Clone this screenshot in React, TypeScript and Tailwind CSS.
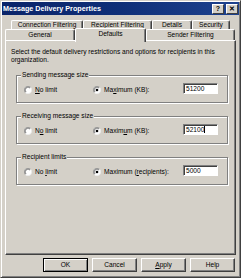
import React from "react";

const font = { fontFamily: '"Liberation Sans", Arial, sans-serif' };

function Radio({ checked }: { checked?: boolean }) {
  return (
    <svg width="8" height="8" viewBox="0 0 12 12" className="shrink-0">
      <circle cx="6" cy="6" r="5.5" fill="#fff" />
      <path d="M10 2 A5.5 5.5 0 0 0 2 10" fill="none" stroke="#808080" strokeWidth="1.2" />
      <path d="M2 10 A5.5 5.5 0 0 0 10 2" fill="none" stroke="#e8e8e8" strokeWidth="1.2" />
      <path d="M9 3 A4.2 4.2 0 0 0 3 9" fill="none" stroke="#404040" strokeWidth="1" />
      {checked && <circle cx="6" cy="6" r="2" fill="#000" />}
    </svg>
  );
}

function Group({
  label,
  noLimit,
  max,
  value,
  cursor,
}: {
  label: string;
  noLimit: React.ReactNode;
  max: React.ReactNode;
  value: string;
  cursor?: boolean;
}) {
  return (
    <div className="relative ml-[10px] mr-[7px] h-[28px] border border-[#808080] shadow-[inset_1px_1px_0_#fff,1px_1px_0_#fff] flex items-center">
      <span className="absolute left-[4px] top-[-5px] bg-[#d4d0c8] px-[1px] leading-[8px] text-[6.6px]">
        {label}
      </span>
      <div className="flex items-center w-[76px] pl-[7px] mt-[1px]">
        <Radio />
        <span className="ml-[3px] text-[6.6px] leading-[8px]">{noLimit}</span>
      </div>
      <div className="flex items-center mt-[1px]">
        <Radio checked />
        <span className="ml-[3px] text-[6.6px] leading-[8px]">{max}</span>
      </div>
      <div className="ml-auto mr-[9px] mt-[-1px] w-[35px] h-[11px] bg-white border border-t-[#808080] border-l-[#808080] border-r-[#fff] border-b-[#fff] shadow-[inset_1px_1px_0_#404040] flex items-center pl-[2px] text-[6.6px]">
        {value}
        {cursor && <span className="inline-block w-[1px] h-[7px] bg-black" />}
      </div>
    </div>
  );
}

function Tab({
  children,
  w,
  selected,
  h,
}: {
  children: React.ReactNode;
  w: number;
  selected?: boolean;
  h: string;
}) {
  return (
    <div
      style={{ width: w }}
      className={`${h} shrink-0 flex items-center justify-center text-[6.6px] whitespace-nowrap border-t border-l border-r border-t-white border-l-white border-r-[#404040] rounded-t-[2px] shadow-[inset_-1px_0_0_#808080] ${
        selected ? "relative z-10 bg-[#d4d0c8]" : ""
      }`}
    >
      {children}
    </div>
  );
}

function Btn({ children, def }: { children: React.ReactNode; def?: boolean }) {
  return (
    <div
      className={`w-[45px] h-[14px] flex items-center justify-center text-[6.6px] bg-[#d4d0c8] ${
        def
          ? "border border-black shadow-[inset_1px_1px_0_#fff,inset_-1px_-1px_0_#808080]"
          : "border border-t-white border-l-white border-r-[#404040] border-b-[#404040] shadow-[inset_-1px_-1px_0_#808080]"
      }`}
    >
      {children}
    </div>
  );
}

export default function App() {
  return (
    <div
      style={font}
      className="w-[241px] h-[278px] bg-[#d4d0c8] text-black overflow-hidden flex flex-col border border-t-[#d4d0c8] border-l-[#d4d0c8] border-r-[#404040] border-b-[#404040] shadow-[inset_1px_1px_0_#fff,inset_-1px_-1px_0_#808080]"
    >
      {/* Title bar */}
      <div className="mx-[1px] mt-[1px] h-[13px] bg-gradient-to-r from-[#0a246a] via-[#0f2f78] to-[#1e428e] flex items-center pl-[1px] pr-[1px]">
        <span className="text-white font-bold text-[7.2px] leading-[9px]">
          Message Delivery Properties
        </span>
        <div className="ml-auto flex">
          <div className="w-[12px] h-[10px] bg-[#d4d0c8] border border-t-white border-l-white border-r-[#404040] border-b-[#404040] flex items-center justify-center text-[7px] font-bold leading-none">
            ?
          </div>
          <div className="ml-[2px] w-[12px] h-[10px] bg-[#d4d0c8] border border-t-white border-l-white border-r-[#404040] border-b-[#404040] flex items-center justify-center text-[7px] font-bold leading-none">
            ✕
          </div>
        </div>
      </div>

      {/* Tabs */}
      <div className="mt-[5px] flex pl-[10px]">
        <Tab w={72} h="h-[9px]">Connection Filtering</Tab>
        <Tab w={69} h="h-[9px]">Recipient Filtering</Tab>
        <Tab w={40} h="h-[9px]">Details</Tab>
        <Tab w={38} h="h-[9px]">Security</Tab>
      </div>
      <div className="flex pl-[4px] items-end h-[11px]">
        <Tab w={70} h="h-[11px]">General</Tab>
        <div className="mb-[-2px]">
          <Tab w={71} h="h-[14px]" selected>
            <span className="mt-[-4px]">Defaults</span>
          </Tab>
        </div>
        <Tab w={89} h="h-[11px]">Sender Filtering</Tab>
      </div>

      {/* Panel */}
      <div className="ml-[4px] mr-[4px] h-[215px] border border-t-white border-l-white border-r-[#404040] border-b-[#404040] shadow-[inset_-1px_-1px_0_#808080] flex flex-col">
        <div className="pl-[5px] pt-[7px] pr-[10px] text-[6.6px] leading-[8px]">
          Select the default delivery restrictions and options for recipients in this organization.
        </div>
        <div className="mt-[11px]">
          <Group
            label="Sending message size"
            noLimit={<><u>N</u>o limit</>}
            max={<>Ma<u>x</u>imum (KB):</>}
            value="51200"
          />
        </div>
        <div className="mt-[13px]">
          <Group
            label="Receiving message size"
            noLimit={<>N<u>o</u> limit</>}
            max={<>Maxim<u>u</u>m (KB):</>}
            value="52100"
            cursor
          />
        </div>
        <div className="mt-[13px]">
          <Group
            label="Recipient limits"
            noLimit={<>No <u>l</u>imit</>}
            max={<>Maximum (<u>r</u>ecipients):</>}
            value="5000"
          />
        </div>
      </div>

      {/* Buttons */}
      <div className="mt-[3px] flex justify-end gap-[4px] pr-[5px]">
        <Btn def>OK</Btn>
        <Btn>Cancel</Btn>
        <Btn>
          <span><u>A</u>pply</span>
        </Btn>
        <Btn>Help</Btn>
      </div>
    </div>
  );
}
